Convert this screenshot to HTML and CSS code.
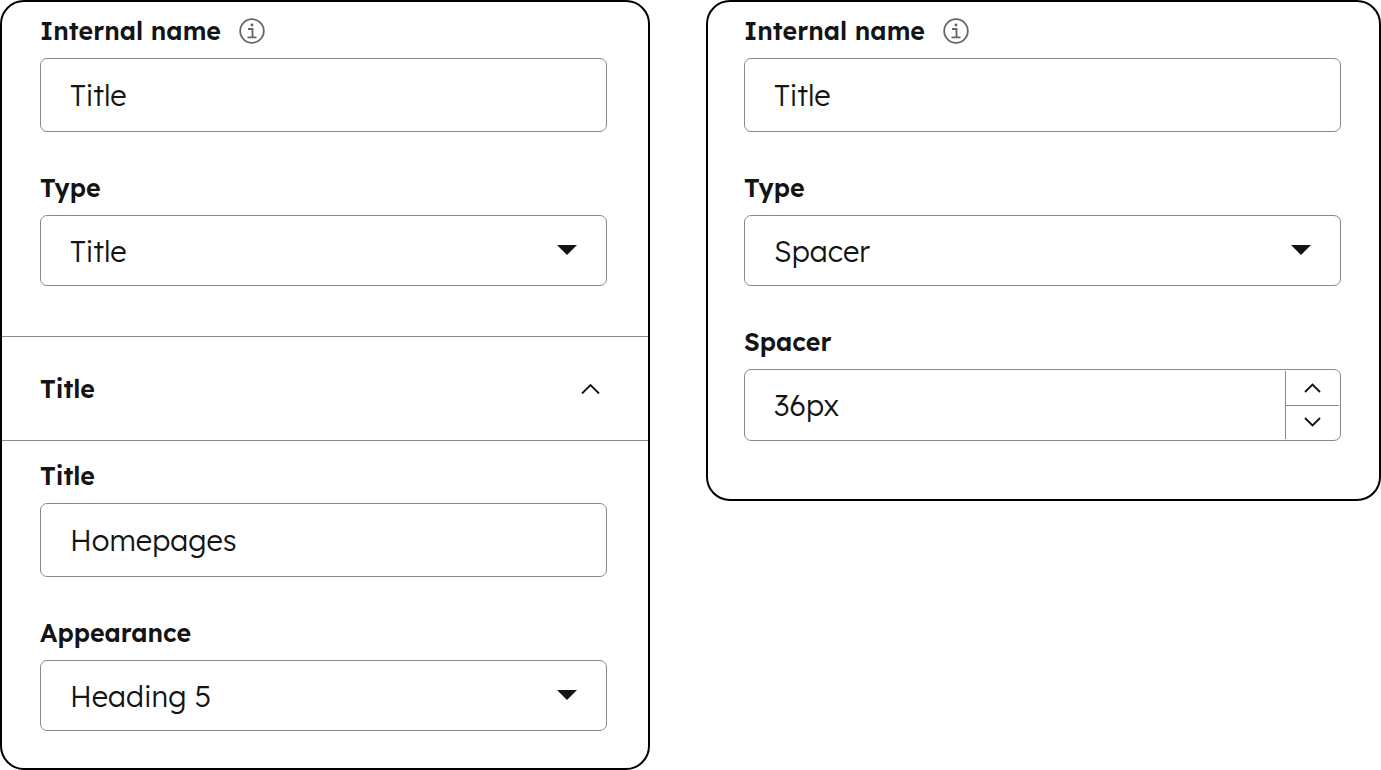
FILE: index.html
```html
<!DOCTYPE html>
<html lang="en">
	<head>
		<meta charset="UTF-8">
		<title>Title and spacer settings</title>
		<link rel="stylesheet" href="styles.css">
	</head>
	<body>
		<div class="panels">
			<form class="panel title-panel">
				<div class="section">
					<div class="field">
						<div class="label-row">
							<label for="titleName">Internal name</label>
							<button type="button" class="info" aria-label="Info">
								<svg width="26" height="26" viewBox="0 0 26 26">
									<circle cx="13" cy="13" r="11.8"/>
									<path d="M9 11h4.500v8M8.500 19.300h9"/>
									<circle class="dot" cx="13" cy="7" r="1.400"/>
								</svg>
							</button>
						</div>
						<input type="text" class="control" id="titleName" value="Title">
					</div>
					<div class="field">
						<label for="titleType">Type</label>
						<div class="select">
							<select class="control" id="titleType">
								<option selected>Title</option>
								<option>Spacer</option>
							</select>
							<svg class="arrow" width="20" height="10" viewBox="0 0 20 10"><path d="M0 0h20L10 10z"/></svg>
						</div>
					</div>
				</div>
				<button type="button" class="toggle" aria-expanded="true">
					<span>Title</span>
					<svg class="chevron" width="20" height="12" viewBox="0 0 20 12"><path d="M1 10.500L9.500 2 18 10.500"/></svg>
				</button>
				<div class="section content">
					<div class="field">
						<label for="titleText">Title</label>
						<input type="text" class="control" id="titleText" value="Homepages">
					</div>
					<div class="field">
						<label for="appearance">Appearance</label>
						<div class="select">
							<select class="control" id="appearance">
								<option>Heading 4</option>
								<option selected>Heading 5</option>
								<option>Heading 6</option>
							</select>
							<svg class="arrow" width="20" height="10" viewBox="0 0 20 10"><path d="M0 0h20L10 10z"/></svg>
						</div>
					</div>
				</div>
			</form>

			<form class="panel spacer-panel">
				<div class="section">
					<div class="field">
						<div class="label-row">
							<label for="spacerName">Internal name</label>
							<button type="button" class="info" aria-label="Info">
								<svg width="26" height="26" viewBox="0 0 26 26">
									<circle cx="13" cy="13" r="11.8"/>
									<path d="M9 11h4.500v8M8.500 19.300h9"/>
									<circle class="dot" cx="13" cy="7" r="1.400"/>
								</svg>
							</button>
						</div>
						<input type="text" class="control" id="spacerName" value="Title">
					</div>
					<div class="field">
						<label for="spacerType">Type</label>
						<div class="select">
							<select class="control" id="spacerType">
								<option>Title</option>
								<option selected>Spacer</option>
							</select>
							<svg class="arrow" width="20" height="10" viewBox="0 0 20 10"><path d="M0 0h20L10 10z"/></svg>
						</div>
					</div>
					<div class="field">
						<label for="spacerSize">Spacer</label>
						<div class="stepper">
							<input type="text" id="spacerSize" value="36px">
							<div class="steps">
								<button type="button" aria-label="Increase">
									<svg class="chevron" width="17" height="10" viewBox="0 0 17 10"><path d="M1 9l7.500-7.500L16 9"/></svg>
								</button>
								<button type="button" aria-label="Decrease">
									<svg class="chevron" width="17" height="10" viewBox="0 0 17 10"><path d="M1 1l7.500 7.500L16 1"/></svg>
								</button>
							</div>
						</div>
					</div>
				</div>
			</form>
		</div>
	</body>
</html>
```
FILE: styles.css
```css
*{
	box-sizing: border-box;
	margin: 0;
	padding: 0;
}
body{
	background: #fff;
	color: #141414;
	font-family: Lexend, "Noto Sans", sans-serif;
}
input, select, button{
	font: inherit;
	color: inherit;
	background: none;
	border: 0;
}
button{
	cursor: pointer;
}
.panels{
	display: grid;
	grid-template-columns: 26fr 27fr;
	gap: 56px;
	align-items: start;
}
.panel{
	border: 2px solid #000;
	border-radius: 24px;
}
.section{
	display: flex;
	flex-direction: column;
	gap: 40px;
	padding-top: 13px;
}
.title-panel .section{
	padding-left: 38px;
	padding-right: 41px;
	padding-bottom: 50px;
}
.title-panel .content{
	padding-top: 19px;
	padding-bottom: 37px;
}
.spacer-panel .section{
	padding-left: 36px;
	padding-right: 38px;
	padding-bottom: 58px;
}
.field{
	display: flex;
	flex-direction: column;
	gap: 11px;
}
.label-row{
	display: flex;
	align-items: center;
	gap: 18px;
}
label, .toggle{
	font-size: 25px;
	line-height: 32px;
	font-weight: 600;
}
.info{
	height: 26px;
}
.info svg{
	display: block;
	fill: none;
	stroke: #666;
	stroke-width: 1.8;
}
.info .dot{
	fill: #666;
	stroke: none;
}
/* inputs and selects */
.control{
	width: 100%;
	height: 74px;
	padding: 0 29px;
	border: 1px solid #888;
	border-radius: 7px;
	font-size: 29px;
	font-weight: 300;
}
.select{
	position: relative;
}
.select .control{
	display: block;
	height: 71px;
	appearance: none;
}
.arrow{
	position: absolute;
	right: 30px;
	top: 30px;
	fill: #141414;
	pointer-events: none;
}
.toggle{
	display: flex;
	justify-content: space-between;
	align-items: center;
	width: 100%;
	height: 105px;
	padding: 0 47px 0 38px;
	border-top: 1px solid #888;
	border-bottom: 1px solid #888;
}
.chevron{
	display: block;
	fill: none;
	stroke: #141414;
	stroke-width: 1.8;
}
/* number box with up and down buttons */
.stepper{
	display: flex;
	height: 72px;
	padding: 1px;
	border: 1px solid #888;
	border-radius: 7px;
}
.stepper input{
	flex: 1;
	min-width: 0;
	padding: 0 28px;
	font-size: 29px;
	font-weight: 300;
}
.steps{
	display: flex;
	flex-direction: column;
	width: 54px;
	border-left: 1px solid #888;
}
.steps button{
	display: flex;
	flex: 1;
	align-items: center;
	justify-content: center;
}
.steps button + button{
	border-top: 1px solid #888;
}
```
